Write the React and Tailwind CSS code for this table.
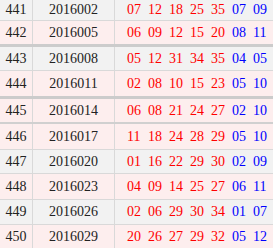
import React from "react";

const rows = [
  { id: "441", date: "2016002", red: ["07", "12", "18", "25", "35"], blue: ["07", "09"], bg: "bg-[#f2f2f2]", h: "h-[20px]", b: "border-b border-[#d9d9d9]" },
  { id: "442", date: "2016005", red: ["06", "09", "12", "15", "20"], blue: ["08", "11"], bg: "bg-[#fdeeee]", h: "h-[23px]", b: "border-b-[3px] border-[#cccccc]" },
  { id: "443", date: "2016008", red: ["05", "12", "31", "34", "35"], blue: ["04", "05"], bg: "bg-[#f2f2f2]", h: "h-[23px]", b: "border-b border-[#d9d9d9]" },
  { id: "444", date: "2016011", red: ["02", "08", "10", "15", "23"], blue: ["05", "10"], bg: "bg-[#fdeeee]", h: "h-[25px]", b: "border-b-[3px] border-[#cccccc]" },
  { id: "445", date: "2016014", red: ["06", "08", "21", "24", "27"], blue: ["02", "10"], bg: "bg-[#fdeeee]", h: "h-[23px]", b: "border-b-[2px] border-[#d0d0d0]" },
  { id: "446", date: "2016017", red: ["11", "18", "24", "28", "29"], blue: ["05", "10"], bg: "bg-[#fdeeee]", h: "h-[25px]", b: "border-b border-[#d9d9d9]" },
  { id: "447", date: "2016020", red: ["01", "16", "22", "29", "30"], blue: ["02", "09"], bg: "bg-[#f2f2f2]", h: "h-[23px]", b: "border-b border-[#d9d9d9]" },
  { id: "448", date: "2016023", red: ["04", "09", "14", "25", "27"], blue: ["06", "11"], bg: "bg-[#fdeeee]", h: "h-[25px]", b: "border-b border-[#d9d9d9]" },
  { id: "449", date: "2016026", red: ["02", "06", "29", "30", "34"], blue: ["01", "07"], bg: "bg-[#f2f2f2]", h: "h-[24px]", b: "border-b border-[#d9d9d9]" },
  { id: "450", date: "2016029", red: ["20", "26", "27", "29", "32"], blue: ["05", "12"], bg: "bg-[#fdeeee]", h: "h-[24px]", b: "" },
];

export default function App() {
  return (
    <div
      className="w-[273px] h-[248px] overflow-hidden bg-white text-[14px] leading-none"
      style={{ fontFamily: '"Liberation Serif", "Noto Sans CJK SC", serif' }}
    >
      {rows.map((r) => (
        <div key={r.id} className={`flex ${r.bg} ${r.b}`}>
          <div className={`${r.h} w-[33px] flex items-center justify-center text-[#222222] border-r border-[#d9d9d9]`}>
            {r.id}
          </div>
          <div className={`${r.h} w-[82px] flex items-center justify-center text-[#222222] border-r border-[#d9d9d9]`}>
            {r.date}
          </div>
          <div className={`${r.h} flex-1 flex items-center pl-[12px] gap-[7px]`}>
            {r.red.map((n, i) => (
              <span key={"r" + i} className="w-[14px] text-[#ff0000]">{n}</span>
            ))}
            {r.blue.map((n, i) => (
              <span key={"b" + i} className="w-[14px] text-[#0000ff]">{n}</span>
            ))}
          </div>
        </div>
      ))}
    </div>
  );
}
